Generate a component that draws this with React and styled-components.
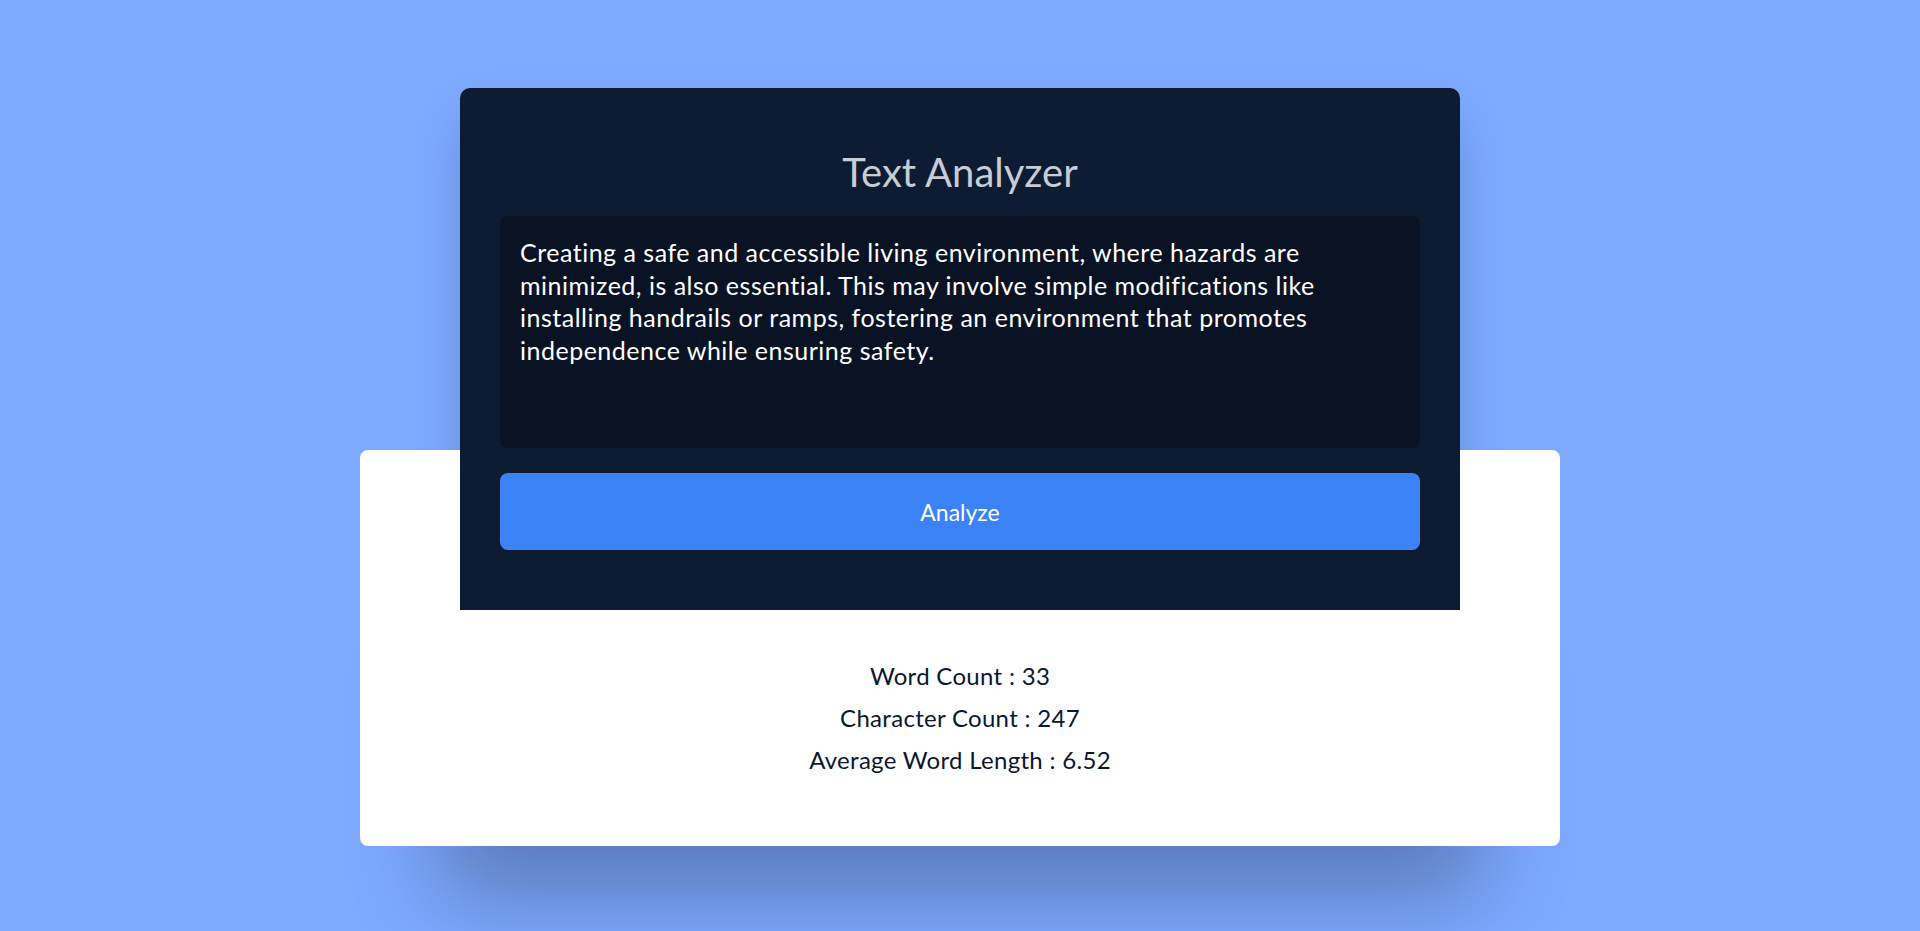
import React, { useState } from "react";
import styled, { createGlobalStyle } from "styled-components";

const GlobalStyle = createGlobalStyle`
  * {
    box-sizing: border-box;
  }
  body {
    margin: 0;
    background: #7da9ff;
    font-family: Lato, "Open Sans", sans-serif;
  }
`;

const Page = styled.main`
  isolation: isolate;
  min-height: 100vh;
  display: flex;
  flex-direction: column;
  align-items: center;
  padding-top: 88px;
`;

// shadow sits on a pseudo element behind the result card, the card itself sits above it
const EditorCard = styled.section`
  position: relative;
  width: 1000px;
  padding: 60px 40px 60px;
  background: #0e1c33;
  border-radius: 10px 10px 0 0;
  display: flex;
  flex-direction: column;

  &::before {
    content: "";
    position: absolute;
    inset: 0;
    z-index: -1;
    border-radius: inherit;
    box-shadow: 0 25px 50px -12px rgba(0, 0, 0, 0.25);
  }
`;

const Title = styled.h1`
  margin: 0 0 20px;
  font-size: 40px;
  line-height: 48px;
  font-weight: 400;
  color: #c8ccd4;
  text-align: center;
`;

const TextArea = styled.textarea`
  display: block;
  width: 100%;
  height: 232px;
  padding: 20px;
  border: 0;
  border-radius: 8px;
  background: #0a1324;
  color: #ffffff;
  font-family: inherit;
  font-size: 25px;
  letter-spacing: 0.5px;
  line-height: 32.5px;
  resize: none;
  outline: none;
  overflow: hidden;
`;

const AnalyzeButton = styled.button`
  margin-top: 25px;
  height: 77px;
  border: 0;
  border-radius: 8px;
  background: #3c82f7;
  color: #ffffff;
  font-family: inherit;
  font-size: 23px;
  cursor: pointer;
`;

const ResultCard = styled.section`
  width: 1200px;
  margin-top: -160px;
  padding: 205px 40px 65px;
  background: #ffffff;
  border-radius: 8px;
  box-shadow: 0 129px 90px -80px rgba(0, 0, 0, 0.28);
  display: flex;
  flex-direction: column;
  align-items: center;
`;

const Stat = styled.p`
  margin: 0;
  font-size: 24px;
  letter-spacing: 0.3px;
  line-height: 42px;
  color: #0b1730;
`;

const sample =
  "Creating a safe and accessible living environment, where hazards are minimized, is also essential. This may involve simple modifications like installing handrails or ramps, fostering an environment that promotes independence while ensuring safety.";

function analyze(text) {
  const words = text.trim().split(/\s+/).filter(Boolean);
  const letters = words.reduce((sum, w) => sum + w.length, 0);
  return {
    words: words.length,
    chars: text.length - 1,
    avg: words.length ? (letters / words.length).toFixed(2) : "0.00",
  };
}

export default function App() {
  const [text, setText] = useState(sample);
  const [stats, setStats] = useState({ words: 33, chars: 247, avg: "6.52" });

  return (
    <>
      <GlobalStyle />
      <Page>
        <EditorCard>
          <Title>Text Analyzer</Title>
          <TextArea value={text} onChange={(e) => setText(e.target.value)} />
          <AnalyzeButton onClick={() => setStats(analyze(text))}>
            Analyze
          </AnalyzeButton>
        </EditorCard>
        <ResultCard>
          <Stat>Word Count : {stats.words}</Stat>
          <Stat>Character Count : {stats.chars}</Stat>
          <Stat>Average Word Length : {stats.avg}</Stat>
        </ResultCard>
      </Page>
    </>
  );
}
